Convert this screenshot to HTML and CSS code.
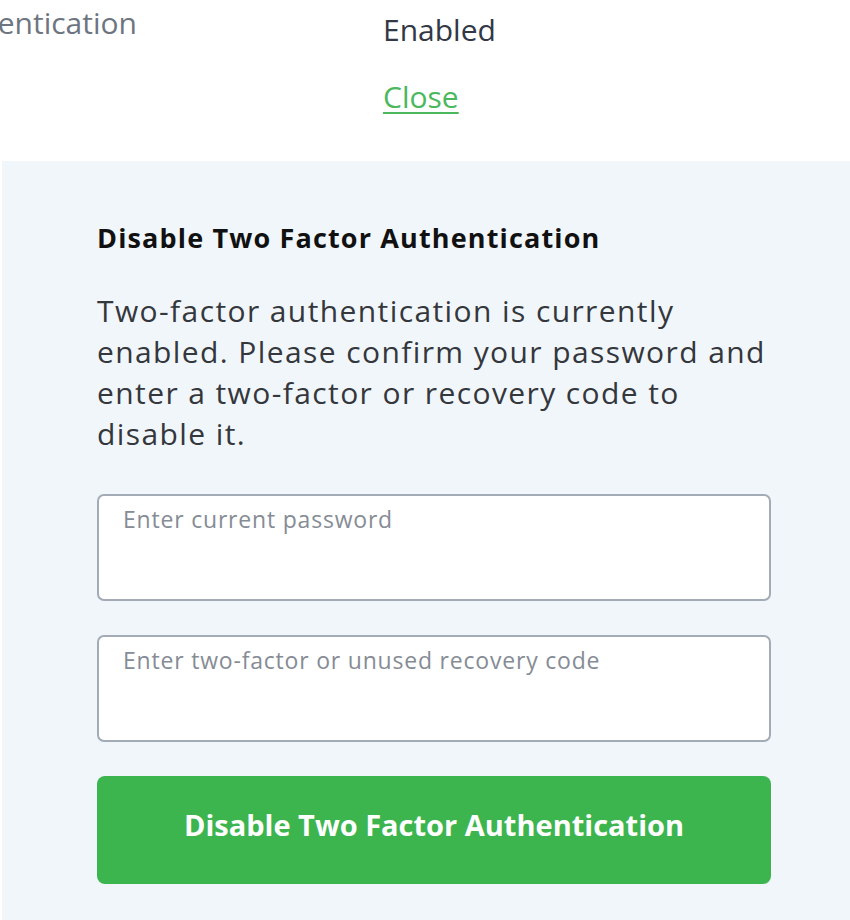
FILE: index.html
```html
<!DOCTYPE html>
<html>
<head>
<meta charset="utf-8">
<link rel="stylesheet" href="styles.css">
</head>
<body>
<div class="summary">
  <div class="label">Two Factor Authentication</div>
  <div class="value">
    <div class="status">Enabled</div>
    <a class="close" href="#">Close</a>
  </div>
</div>
<section class="panel">
  <h2 class="title">Disable Two Factor Authentication</h2>
  <p class="desc">Two-factor authentication is currently enabled. Please confirm your password and enter a two-factor or recovery code to disable it.</p>
  <form class="form">
    <textarea class="field" placeholder="Enter current password"></textarea>
    <textarea class="field" placeholder="Enter two-factor or unused recovery code"></textarea>
    <button type="button" class="btn">Disable Two Factor Authentication</button>
  </form>
</section>
</body>
</html>
```
FILE: styles.css
```css
html, body {
  margin: 0;
  padding: 0;
  background: #ffffff;
  font-family: "Open Sans", "Noto Sans", sans-serif;
  overflow: hidden;
}
.summary {
  display: grid;
  grid-template-columns: 383px 1fr;
  height: 161px;
}
.label {
  display: flex;
  justify-content: flex-end;
  padding-right: 246px;
  padding-top: 3px;
  white-space: nowrap;
  font-size: 30px;
  line-height: 40px;
  color: #6d7580;
}
.value {
  display: flex;
  flex-direction: column;
  align-items: flex-start;
  padding-top: 10px;
}
.status {
  font-size: 30px;
  line-height: 40px;
  color: #323846;
}
.close {
  margin-top: 27px;
  font-size: 30px;
  line-height: 40px;
  color: #4cb85d;
  text-decoration: underline;
  text-decoration-thickness: 2px;
  text-underline-offset: 4px;
}
.panel {
  margin-left: 2px;
  background: #f1f6fb;
  padding: 59px 79px 36px 95px;
}
.title {
  margin: 0;
  font-size: 27px;
  line-height: 36px;
  font-weight: 700;
  letter-spacing: 1.15px;
  color: #111111;
}
.desc {
  margin: 34px -16px 0 0;
  font-size: 30px;
  line-height: 41px;
  letter-spacing: 1.4px;
  color: #34373c;
}
.form {
  display: flex;
  flex-direction: column;
  gap: 34px;
  margin-top: 40px;
}
.field {
  box-sizing: border-box;
  display: block;
  height: 107px;
  width: 100%;
  resize: none;
  border: 2px solid #a2abb6;
  border-radius: 7px;
  background: #ffffff;
  padding: 8px 24px;
  font-family: inherit;
  font-size: 23px;
  line-height: 30px;
  letter-spacing: 0.8px;
  color: #333;
  outline: none;
}
.field::placeholder {
  color: #868c95;
}
.btn {
  display: block;
  box-sizing: border-box;
  height: 108px;
  padding: 29px 0 39px;
  border: none;
  border-radius: 8px;
  background: #3cb54f;
  color: #ffffff;
  font-family: inherit;
  font-size: 29px;
  line-height: 40px;
  font-weight: 700;
  cursor: pointer;
}
```
